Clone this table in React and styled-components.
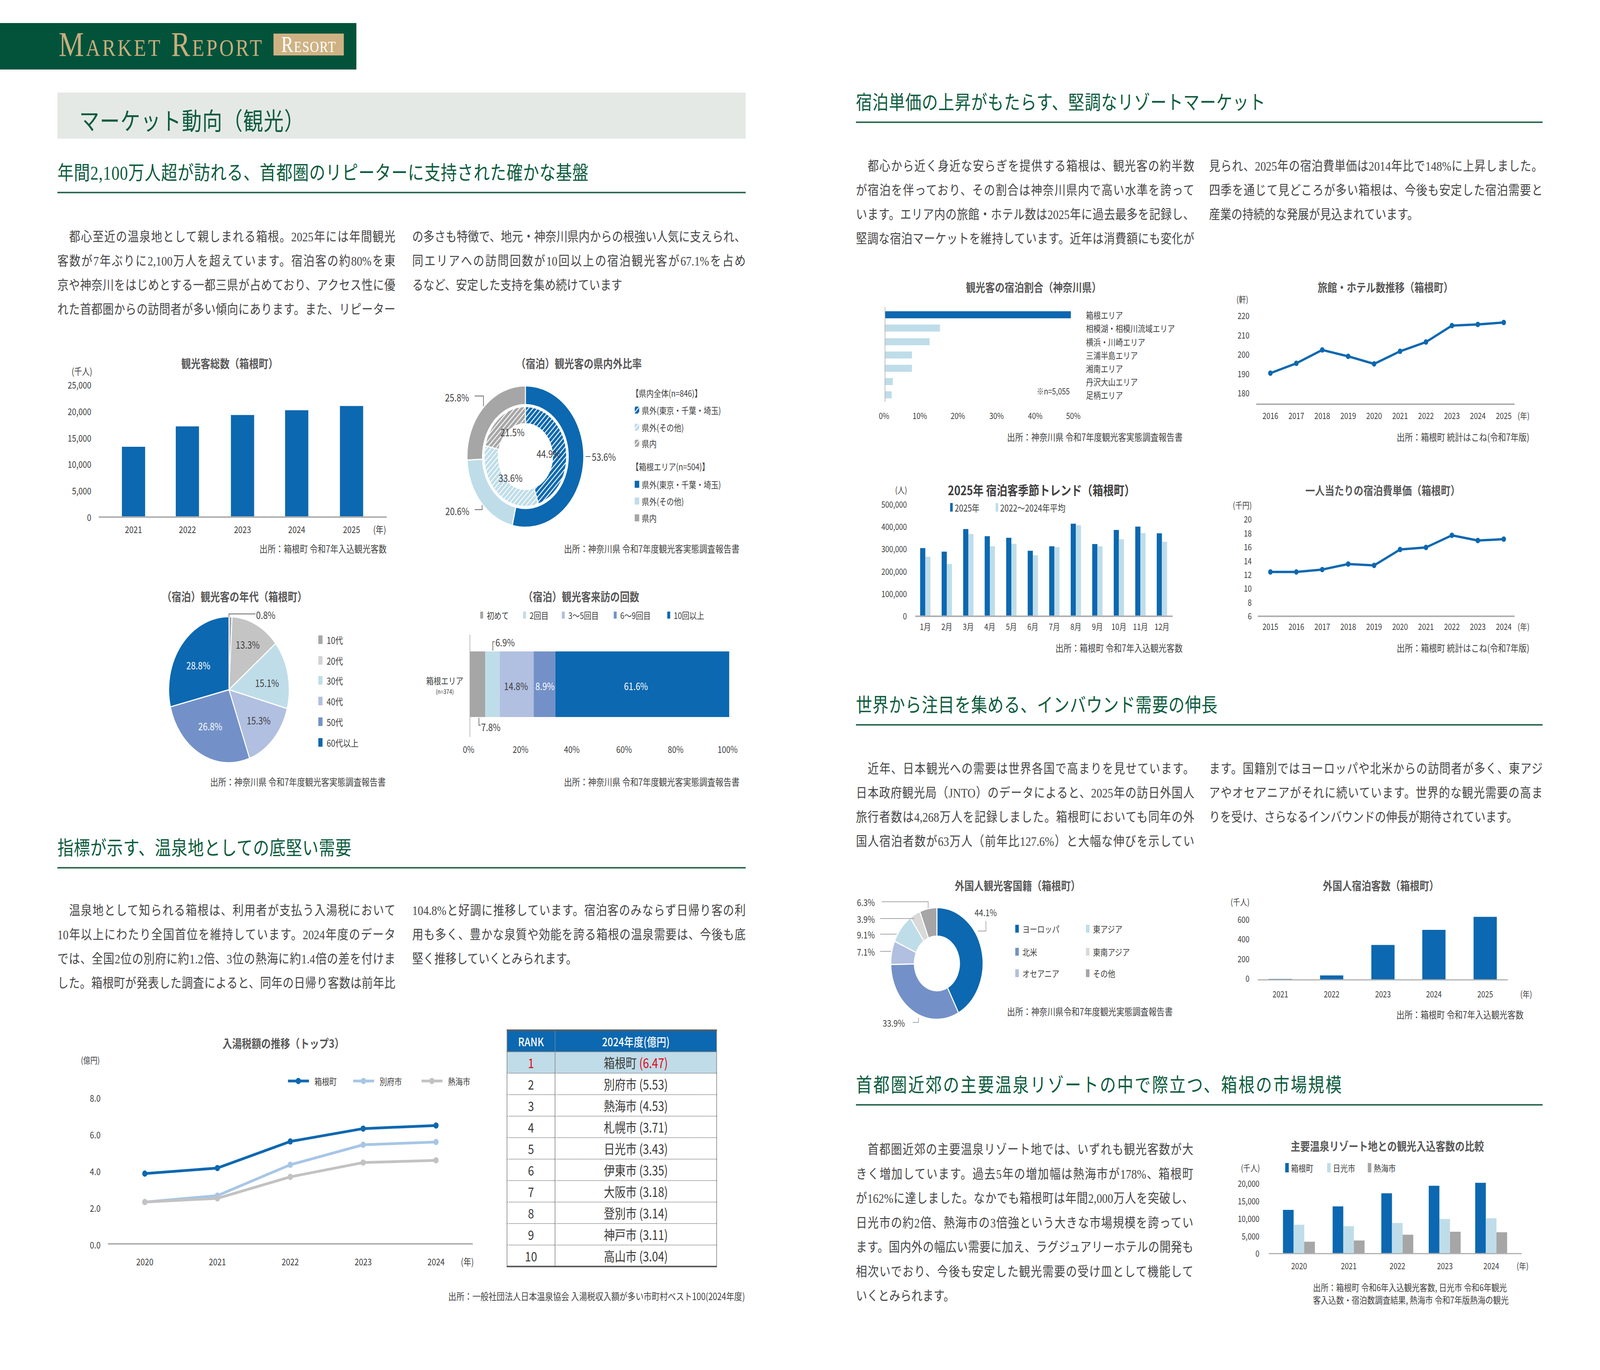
import React, { useEffect, useState } from 'react';
import styled, { createGlobalStyle } from 'styled-components';

const SERIF = `"Liberation Serif", "Noto Sans CJK JP", serif`;
const SANS = `"Noto Sans CJK JP", "Noto Sans", sans-serif`;
const GREEN = '#0d5c3e';
const BLUE = '#0c68b0';
const LBLUE = '#bfdde9';
const LAV = '#b1bfe0';
const MID = '#7391c8';
const GRAY = '#a6a6a6';
const LGRAY = '#d3d3d3';
const AXIS = '#b0b0b0';
const PAGE_W = 4961;
const PAGE_H = 3508;

const GlobalStyle = createGlobalStyle`
  *, *::before, *::after { box-sizing: border-box; }
  html, body { margin: 0; padding: 0; background: #fff; overflow: hidden; }
`;

const Viewport = styled.div`
  width: 100vw;
  height: 100vh;
  overflow: hidden;
`;

const Sheet = styled.div`
  width: ${PAGE_W}px;
  height: ${PAGE_H}px;
  overflow: hidden;
  display: grid;
  grid-template-columns: 2480px 2481px;
  background: #fff;
  color: #444;
  transform-origin: 0 0;
`;

const LeftPage = styled.div`
  padding-top: 59px;
`;

const Column = styled.div`
  padding: 0 168px 0 178px;
`;

const RightPage = styled.div`
  padding: 233px 178px 0 174px;
`;

const Brand = styled.div`
  width: 1105px;
  height: 119px;
  background: #03533b;
  display: flex;
  align-items: center;
  padding: 0 0 10px 182px;
`;

const BrandText = styled.span`
  font-family: "Liberation Serif", serif;
  font-size: 88px;
  line-height: 1;
  font-variant: small-caps;
  letter-spacing: 6px;
  color: #c9ad7d;
`;

const ResortTag = styled.span`
  margin-left: 30px;
  width: 218px;
  height: 56px;
  background: #cfb284;
  color: #fff;
  display: flex;
  align-items: center;
  justify-content: center;
  font-family: "Liberation Serif", serif;
  font-size: 56px;
  line-height: 1;
  font-variant: small-caps;
  letter-spacing: 2px;
`;

const PageTitle = styled.h1`
  margin: 59px 0 0;
  height: 118px;
  background: #e5e9e6;
  display: flex;
  align-items: center;
  padding: 20px 0 0 68px;
  font-family: ${SERIF};
  font-weight: 400;
  font-size: 62px;
  letter-spacing: 1.5px;
  color: ${GREEN};
`;

const SectionHead = styled.h2`
  margin: ${p => p.$top}px 0 0;
  padding-bottom: 18px;
  border-bottom: 4px solid #2f6b53;
  font-family: ${SERIF};
  font-weight: 400;
  font-size: 50px;
  line-height: 60px;
  letter-spacing: ${p => p.$track ?? 1}px;
  color: ${GREEN};
  white-space: nowrap;
`;

const ProseGrid = styled.div`
  margin-top: ${p => p.$top}px;
  display: grid;
  grid-template-columns: ${p => p.$cols};
  column-gap: ${p => p.$gap || 0}px;
  font-family: ${SERIF};
  font-size: 34.4px;
  line-height: ${p => p.$lh || 62}px;
  color: #464646;
`;

const ProseLine = styled.span`
  display: block;
  white-space: nowrap;
  text-align: justify;
  text-align-last: ${p => (p.$last ? 'left' : 'justify')};
`;

const ChartRow = styled.div`
  margin-top: ${p => p.$top}px;
  display: flex;
  gap: ${p => p.$gap || 0}px;
  align-items: flex-start;
`;

const ChartBox = styled.figure`
  margin: 0;
  width: ${p => p.$w}px;
  padding-top: ${p => p.$pt || 0}px;
  display: flex;
  flex-direction: column;
  flex-shrink: 0;
`;

const ChartTitle = styled.figcaption`
  height: 36px;
  line-height: 36px;
  font-family: ${SANS};
  font-size: ${p => p.$size || 30}px;
  font-weight: 700;
  color: ${p => (p.$dark ? '#3f3f3f' : '#595959')};
  text-align: ${p => (p.$left != null ? 'left' : 'center')};
  padding-left: ${p => (p.$left != null ? p.$left : Math.max(0, (p.$shift || 0) * 2))}px;
  padding-right: ${p => Math.max(0, -(p.$shift || 0) * 2)}px;
  white-space: nowrap;
`;

const Plot = styled.svg`
  display: block;
  overflow: visible;
  font-family: ${SANS};
`;

const Source = styled.div`
  margin-top: ${p => p.$top ?? 3}px;
  font-family: ${SANS};
  font-size: 25px;
  line-height: 28px;
  color: #444;
  text-align: right;
  padding-right: ${p => p.$pad || 0}px;
  white-space: nowrap;
`;

const TaxRow = styled.div`
  margin-top: 88px;
  display: flex;
  align-items: flex-start;
`;

const RankTable = styled.table`
  width: 652px;
  border-collapse: collapse;
  font-family: ${SANS};
  border-top: 4px solid #5c5c5c;
  border-bottom: 4px solid #5c5c5c;
  border-left: 2px solid #8a8a8a;
  border-right: 2px solid #8a8a8a;
`;

const HeadCell = styled.th`
  height: 55px;
  padding: 0;
  background: ${BLUE};
  color: #fff;
  font-size: 30px;
  font-weight: 500;
  text-align: center;
  width: ${p => (p.$rank ? '149px' : 'auto')};
  border-right: ${p => (p.$rank ? '2px solid #5d86b8' : 'none')};
`;

const Cell = styled.td`
  height: 55px;
  padding: 0;
  font-size: 34px;
  color: ${p => (p.$red ? '#e60012' : '#3a3a3a')};
  text-align: center;
  background: ${p => (p.$hl ? '#bfdce8' : 'transparent')};
  border-top: ${p => (p.$first ? '2px solid #7a7a7a' : '2px dotted #6a6a6a')};
  border-right: ${p => (p.$rank ? '2px solid #8a8a8a' : 'none')};
`;

const Red = styled.span`
  color: #e60012;
`;

const FinalRow = styled.div`
  margin-top: 81px;
  display: flex;
  align-items: flex-start;
  gap: 56px;
`;

/* ---------- svg helpers ---------- */

const T = ({ c = '#404040', s = 24, w, children, ...p }) => (
  <text fill={c} fontSize={s} fontWeight={w} dominantBaseline="central" {...p}>
    {children}
  </text>
);

const polar = (cx, cy, r, a) => {
  const rad = (a * Math.PI) / 180;
  return [cx + r * Math.sin(rad), cy - r * Math.cos(rad)];
};

const arc = (cx, cy, r0, r1, a0, a1) => {
  const large = a1 - a0 > 180 ? 1 : 0;
  const [x1, y1] = polar(cx, cy, r1, a0);
  const [x2, y2] = polar(cx, cy, r1, a1);
  if (r0 === 0) {
    return `M${cx} ${cy} L${x1} ${y1} A${r1} ${r1} 0 ${large} 1 ${x2} ${y2} Z`;
  }
  const [x3, y3] = polar(cx, cy, r0, a1);
  const [x4, y4] = polar(cx, cy, r0, a0);
  return `M${x1} ${y1} A${r1} ${r1} 0 ${large} 1 ${x2} ${y2} L${x3} ${y3} A${r0} ${r0} 0 ${large} 0 ${x4} ${y4} Z`;
};

const angles = vals => {
  const total = vals.reduce((a, b) => a + b, 0);
  let acc = 0;
  return vals.map(v => {
    const a0 = (acc / total) * 360;
    acc += v;
    return [a0, (acc / total) * 360];
  });
};

const Ring = ({ cx, cy, r0, r1, data, gap = 3 }) => {
  const ang = angles(data.map(d => d[0]));
  return data.map((d, i) => (
    <path key={i} d={arc(cx, cy, r0, r1, ang[i][0], ang[i][1])} fill={d[1]} stroke="#fff" strokeWidth={gap} />
  ));
};

const Hatch = ({ id, color }) => (
  <pattern id={id} patternUnits="userSpaceOnUse" width="10" height="10" patternTransform="rotate(45)">
    <rect width="10" height="10" fill={color} />
    <line x1="5" y1="0" x2="5" y2="10" stroke="#fff" strokeWidth="2.6" />
  </pattern>
);

const Series = ({ xs, ys, color, width = 7, r = 8 }) => (
  <g>
    <polyline points={xs.map((x, i) => `${x},${ys[i]}`).join(' ')} fill="none" stroke={color} strokeWidth={width} strokeLinejoin="round" />
    {xs.map((x, i) => (
      <circle key={i} cx={x} cy={ys[i]} r={r} fill={color} />
    ))}
  </g>
);

const fmt = v => v.toLocaleString('en-US');

/* ---------- left page charts ---------- */

function VisitorsPlot() {
  const y = v => 376 - v * 0.01356;
  const data = [[236, '2021', 13200], [403, '2022', 17050], [574, '2023', 19200], [742, '2024', 20100], [912, '2025', 20900]];
  return (
    <Plot width={1068} height={440}>
      <T x={76} y={2} textAnchor="middle">(千人)</T>
      {[0, 5000, 10000, 15000, 20000, 25000].map(v => (
        <T key={v} x={105} y={y(v)} textAnchor="end">{fmt(v)}</T>
      ))}
      {data.map(([cx, , v]) => (
        <rect key={cx} x={cx - 36} y={y(v)} width={72} height={376 - y(v)} fill={BLUE} />
      ))}
      <line x1={128} x2={1021} y1={377} y2={377} stroke={AXIS} strokeWidth={4} />
      {data.map(([cx, label]) => (
        <T key={label} x={cx} y={407} textAnchor="middle">{label}</T>
      ))}
      <T x={999} y={407} textAnchor="middle">(年)</T>
    </Plot>
  );
}

function ResidencePlot() {
  const cx = 351;
  const cy = 222;
  const legend = [
    { y: 59, t: '【県内全体(n=846)】' },
    { y: 103, t: '県外(東京・千葉・埼玉)', f: 'url(#hbBlue)' },
    { y: 147, t: '県外(その他)', f: 'url(#hbLight)' },
    { y: 188, t: '県内', f: 'url(#hbGray)' },
    { y: 247, t: '【箱根エリア(n=504)】' },
    { y: 293, t: '県外(東京・千葉・埼玉)', f: BLUE },
    { y: 336, t: '県外(その他)', f: LBLUE },
    { y: 379, t: '県内', f: GRAY },
  ];
  return (
    <Plot width={1034} height={440}>
      <defs>
        <Hatch id="hbBlue" color={BLUE} />
        <Hatch id="hbLight" color={LBLUE} />
        <Hatch id="hbGray" color={GRAY} />
      </defs>
      <Ring cx={cx} cy={cy} r0={133} r1={181} data={[[53.6, BLUE], [20.6, LBLUE], [25.8, GRAY]]} />
      <Ring cx={cx} cy={cy} r0={84} r1={128} data={[[44.9, 'url(#hbBlue)'], [33.6, 'url(#hbLight)'], [21.5, 'url(#hbGray)']]} />
      <polyline points="194,67 221,67 221,93" fill="none" stroke="#666" strokeWidth={2} />
      <polyline points="194,358 217,358 217,346" fill="none" stroke="#666" strokeWidth={2} />
      <line x1={538} x2={553} y1={222} y2={222} stroke="#666" strokeWidth={2} />
      <T x={139} y={70} s={26} textAnchor="middle">25.8%</T>
      <T x={140} y={361} s={26} textAnchor="middle">20.6%</T>
      <T x={557} y={222} s={26}>53.6%</T>
      <T x={311} y={159} s={26} textAnchor="middle">21.5%</T>
      <T x={423} y={214} s={26} textAnchor="middle">44.9%</T>
      <T x={305} y={276} s={26} textAnchor="middle">33.6%</T>
      {legend.map(l =>
        l.f ? (
          <g key={l.y}>
            <rect x={690} y={l.y - 9} width={14} height={18} fill={l.f} />
            <T x={712} y={l.y} s={23}>{l.t}</T>
          </g>
        ) : (
          <T key={l.y} x={680} y={l.y} s={23}>{l.t}</T>
        )
      )}
    </Plot>
  );
}

function AgePlot() {
  const cx = 532;
  const cy = 222;
  const pie = [[0.8, GRAY], [13.3, '#c4c4c4'], [15.1, LBLUE], [15.3, LAV], [26.8, MID], [28.8, BLUE]];
  const legend = [['10代', GRAY], ['20代', LGRAY], ['30代', LBLUE], ['40代', LAV], ['50代', MID], ['60代以上', BLUE]];
  const ly = [94, 147, 198, 251, 304, 357];
  return (
    <Plot width={1068} height={440}>
      <Ring cx={cx} cy={cy} r0={0} r1={187} data={pie} />
      <polyline points="532,36 532,28 614,28" fill="none" stroke="#666" strokeWidth={2} />
      <T x={616} y={30} s={26}>0.8%</T>
      <T x={590} y={106} s={26} textAnchor="middle">13.3%</T>
      <T x={650} y={204} s={26} textAnchor="middle">15.1%</T>
      <T x={624} y={300} s={26} textAnchor="middle">15.3%</T>
      <T x={474} y={315} s={26} c="#fff" textAnchor="middle">26.8%</T>
      <T x={437} y={159} s={26} c="#fff" textAnchor="middle">28.8%</T>
      {legend.map(([t, f], i) => (
        <g key={t}>
          <rect x={809} y={ly[i] - 11} width={13} height={22} fill={f} />
          <T x={835} y={ly[i]}>{t}</T>
        </g>
      ))}
    </Plot>
  );
}

function RepeatPlot() {
  const x0 = 179;
  const full = 804;
  const segs = [[5.9, GRAY], [5.6, LBLUE], [13.1, LAV], [8.4, MID], [67.0, BLUE]];
  let acc = x0;
  const rects = segs.map(([p, c]) => {
    const w = (p / 100) * full;
    const r = { x: acc, w, c };
    acc += w;
    return r;
  });
  const legend = [[211, '初めて', GRAY], [344, '2回目', LBLUE], [464, '3～5回目', LAV], [625, '6～9回目', MID], [791, '10回以上', BLUE]];
  const ticks = [[175, '0%'], [336, '20%'], [495, '40%'], [657, '60%'], [817, '80%'], [978, '100%']];
  return (
    <Plot width={1034} height={440}>
      {legend.map(([x, t, c]) => (
        <g key={t}>
          <rect x={x} y={22} width={9} height={18} fill={c} />
          <T x={x + 20} y={31} s={23}>{t}</T>
        </g>
      ))}
      <line x1={x0} x2={x0} y1={81} y2={343} stroke={AXIS} strokeWidth={2} />
      {rects.map(r => (
        <rect key={r.x} x={r.x} y={124} width={r.w} height={168} fill={r.c} />
      ))}
      <polyline points="256,99 250,99 250,122" fill="none" stroke="#666" strokeWidth={2} />
      <polyline points="207,294 207,313 212,313" fill="none" stroke="#666" strokeWidth={2} />
      <T x={258} y={100} s={26}>6.9%</T>
      <T x={214} y={317} s={26}>7.8%</T>
      <T x={322} y={212} s={26} textAnchor="middle">14.8%</T>
      <T x={412} y={212} s={26} c="#fff" textAnchor="middle">8.9%</T>
      <T x={694} y={212} s={26} c="#fff" textAnchor="middle">61.6%</T>
      <T x={101} y={198} s={23} textAnchor="middle">箱根エリア</T>
      <T x={101} y={226} s={16} textAnchor="middle">(n=374)</T>
      {ticks.map(([x, t]) => (
        <T key={t} x={x} y={373} textAnchor="middle">{t}</T>
      ))}
    </Plot>
  );
}

function TaxPlot() {
  const xs = [271, 496, 722, 948, 1174];
  const y = v => 498 - v * 47;
  const legend = [[715, '箱根町', BLUE], [917, '別府市', '#a7c6e6'], [1129, '熱海市', '#c2c2c2']];
  return (
    <Plot width={1393} height={568}>
      <T x={102} y={26} s={22} textAnchor="middle">(億円)</T>
      {legend.map(([x, t, c]) => (
        <g key={t}>
          <line x1={x} x2={x + 65} y1={80} y2={80} stroke={c} strokeWidth={7} />
          <circle cx={x + 32} cy={80} r={8} fill={c} />
          <T x={x + 82} y={80} s={23}>{t}</T>
        </g>
      ))}
      {[0, 2, 4, 6, 8].map(v => (
        <T key={v} x={134} y={y(v)} textAnchor="end">{v.toFixed(1)}</T>
      ))}
      <line x1={157} x2={1288} y1={497} y2={497} stroke={AXIS} strokeWidth={4} />
      <Series xs={xs} ys={[2.3, 2.65, 4.33, 5.42, 5.57].map(y)} color="#a7c6e6" />
      <Series xs={xs} ys={[2.3, 2.5, 3.67, 4.45, 4.57].map(y)} color="#c2c2c2" />
      <Series xs={xs} ys={[3.85, 4.15, 5.6, 6.3, 6.47].map(y)} color={BLUE} />
      {['2020', '2021', '2022', '2023', '2024'].map((t, i) => (
        <T key={t} x={xs[i]} y={541} textAnchor="middle">{t}</T>
      ))}
      <T x={1271} y={541} textAnchor="middle">(年)</T>
    </Plot>
  );
}

/* ---------- right page charts ---------- */

function StayRatioPlot() {
  const rows = [
    ['箱根エリア', 49.6, BLUE],
    ['相模湖・相模川流域エリア', 14.7, LBLUE],
    ['横浜・川崎エリア', 11.9, LBLUE],
    ['三浦半島エリア', 7.2, LBLUE],
    ['湘南エリア', 7.2, LBLUE],
    ['丹沢大山エリア', 2.1, LBLUE],
    ['足柄エリア', 1.8, LBLUE],
  ];
  const ry = [54, 88, 123, 157, 191, 225, 259];
  const ticks = [[87, '0%'], [198, '10%'], [316, '20%'], [436, '30%'], [556, '40%'], [674, '50%']];
  return (
    <Plot width={1102} height={349}>
      {rows.map(([t, v, c], i) => (
        <g key={t}>
          <rect x={90} y={ry[i] - 9} width={v * 11.62} height={18} fill={c} />
          <T x={713} y={ry[i]} s={23}>{t}</T>
        </g>
      ))}
      <line x1={90} x2={90} y1={35} y2={277} stroke={AXIS} strokeWidth={2} />
      <T x={663} y={249} s={22} textAnchor="end">※n=5,055</T>
      {ticks.map(([x, t]) => (
        <T key={t} x={x} y={312} s={22} textAnchor="middle">{t}</T>
      ))}
    </Plot>
  );
}

function HotelPlot() {
  const xs = Array.from({ length: 10 }, (_, i) => 183 + i * 80.4);
  const y = v => 56 + (220 - v) * 4.95;
  const vals = [190.2, 195.3, 202.2, 198.9, 195, 201.5, 206.3, 214.8, 215.4, 216.4];
  return (
    <Plot width={1027} height={349}>
      <T x={96} y={14} s={22} textAnchor="middle">(軒)</T>
      {[180, 190, 200, 210, 220].map(v => (
        <T key={v} x={118} y={y(v)} s={22} textAnchor="end">{v}</T>
      ))}
      <line x1={139} x2={940} y1={283} y2={283} stroke={AXIS} strokeWidth={4} />
      <Series xs={xs} ys={vals.map(y)} color={BLUE} width={6} r={7} />
      {xs.map((x, i) => (
        <T key={x} x={x} y={312} s={22} textAnchor="middle">{2016 + i}</T>
      ))}
      <T x={968} y={312} s={22} textAnchor="middle">(年)</T>
    </Plot>
  );
}

function SeasonPlot() {
  const y = v => 305 - (v / 100000) * 57.3;
  const dark = [303, 287, 388, 356, 349, 291, 311, 412, 321, 384, 399, 369];
  const light = [264, 232, 366, 311, 322, 271, 307, 405, 311, 342, 370, 331];
  const cxs = dark.map((_, i) => 215 + i * 66.7);
  return (
    <Plot width={1102} height={369}>
      <T x={140} y={-18} s={22} textAnchor="middle">(人)</T>
      <rect x={292} y={16} width={8} height={22} fill={BLUE} />
      <T x={306} y={27} s={24}>2025年</T>
      <rect x={433} y={16} width={8} height={22} fill={LBLUE} />
      <T x={447} y={27} s={24}>2022～2024年平均</T>
      {[0, 100000, 200000, 300000, 400000, 500000].map(v => (
        <T key={v} x={158} y={y(v)} s={22} textAnchor="end">{fmt(v)}</T>
      ))}
      {cxs.map((cx, i) => (
        <g key={cx}>
          <rect x={cx - 16} y={y(dark[i] * 1000)} width={16} height={305 - y(dark[i] * 1000)} fill={BLUE} />
          <rect x={cx} y={y(light[i] * 1000)} width={16} height={305 - y(light[i] * 1000)} fill={LBLUE} />
          <T x={cx} y={332} s={22} textAnchor="middle">{`${i + 1}月`}</T>
        </g>
      ))}
      <line x1={184} x2={982} y1={306} y2={306} stroke={AXIS} strokeWidth={4} />
    </Plot>
  );
}

function PricePlot() {
  const xs = Array.from({ length: 10 }, (_, i) => 183 + i * 80.4);
  const y = v => 305 - (v - 6) * 17.7;
  const vals = [12.35, 12.35, 12.7, 13.5, 13.3, 15.6, 15.9, 17.65, 16.9, 17.1];
  return (
    <Plot width={1027} height={369}>
      <T x={96} y={21} s={22} textAnchor="middle">(千円)</T>
      {[6, 8, 10, 12, 14, 16, 18, 20].map(v => (
        <T key={v} x={125} y={y(v)} s={22} textAnchor="end">{v}</T>
      ))}
      <line x1={144} x2={940} y1={306} y2={306} stroke={AXIS} strokeWidth={4} />
      <Series xs={xs} ys={vals.map(y)} color={BLUE} width={6} r={7} />
      {xs.map((x, i) => (
        <T key={x} x={x} y={332} s={22} textAnchor="middle">{2015 + i}</T>
      ))}
      <T x={968} y={332} s={22} textAnchor="middle">(年)</T>
    </Plot>
  );
}

function NationalityPlot() {
  const cx = 251;
  const cy = 183;
  const data = [[44.1, BLUE], [33.9, MID], [7.1, LAV], [9.1, LBLUE], [3.9, '#d9d9d9'], [6.3, GRAY]];
  const legend = [
    [494, 94, 'ヨーロッパ', BLUE],
    [713, 94, '東アジア', LBLUE],
    [494, 153, '北米', MID],
    [713, 153, '東南アジア', '#d9d9d9'],
    [494, 208, 'オセアニア', LAV],
    [713, 208, 'その他', GRAY],
  ];
  return (
    <Plot width={1102} height={358}>
      <Ring cx={cx} cy={cy} r0={70} r1={143} data={data} />
      <g fill="none" stroke="#a6a6a6" strokeWidth={2}>
        <polyline points="80,25 224,25 224,42" />
        <polyline points="75,68 181,68" />
        <polyline points="75,108 126,108" />
        <polyline points="75,152 109,152" />
        <polyline points="403,74 403,100 378,100" />
        <polyline points="176,334 194,334 194,322" />
      </g>
      <T x={3} y={25} s={24}>6.3%</T>
      <T x={3} y={68} s={24}>3.9%</T>
      <T x={3} y={108} s={24}>9.1%</T>
      <T x={3} y={152} s={24}>7.1%</T>
      <T x={368} y={51} s={24}>44.1%</T>
      <T x={83} y={334} s={24}>33.9%</T>
      {legend.map(([x, y, t, c]) => (
        <g key={t}>
          <rect x={x} y={y - 10} width={11} height={20} fill={c} />
          <T x={x + 22} y={y} s={23}>{t}</T>
        </g>
      ))}
      <T x={982} y={305} s={25} c="#444" textAnchor="end">出所：神奈川県令和7年度観光実態調査報告書</T>
    </Plot>
  );
}

function InboundPlot() {
  const y = v => 224 - v * 0.2525;
  const bars = [[214, '2021', 5], [373, '2022', 41], [532, '2023', 350], [690, '2024', 503], [849, '2025', 635]];
  return (
    <Plot width={1027} height={358}>
      <T x={89} y={25} s={22} textAnchor="middle">(千人)</T>
      {[0, 200, 400, 600].map(v => (
        <T key={v} x={118} y={y(v) - 3} s={22} textAnchor="end">{v}</T>
      ))}
      {bars.map(([cx, t, v]) => (
        <g key={t}>
          <rect x={cx - 36} y={y(v)} width={72} height={224 - y(v)} fill={BLUE} />
          <T x={cx} y={261} s={22} textAnchor="middle">{t}</T>
        </g>
      ))}
      <line x1={144} x2={919} y1={225} y2={225} stroke={AXIS} strokeWidth={3} />
      <T x={976} y={261} s={22} textAnchor="middle">(年)</T>
      <T x={968} y={313} s={25} c="#444" textAnchor="end">出所：箱根町 令和7年入込観光客数</T>
    </Plot>
  );
}

function ComparePlot() {
  const y = v => 258 - v * 0.00895;
  const groups = [
    [272, '2020', 12400, 8150, 3300],
    [426, '2021', 13400, 7750, 3650],
    [577, '2022', 17150, 8650, 5300],
    [724, '2023', 19300, 9800, 6150],
    [868, '2024', 20150, 10000, 6000],
  ];
  const legend = [[229, '箱根町', BLUE], [359, '日光市', LBLUE], [485, '熱海市', GRAY]];
  return (
    <Plot width={1027} height={400}>
      <T x={121} y={39} s={22} textAnchor="middle">(千人)</T>
      {legend.map(([x, t, c]) => (
        <g key={t}>
          <rect x={x} y={27} width={11} height={24} fill={c} />
          <T x={x + 18} y={39} s={23}>{t}</T>
        </g>
      ))}
      {[0, 5000, 10000, 15000, 20000].map(v => (
        <T key={v} x={149} y={y(v)} s={22} textAnchor="end">{fmt(v)}</T>
      ))}
      {groups.map(([cx, t, a, b, c]) => (
        <g key={t}>
          <rect x={cx - 50} y={y(a)} width={33} height={258 - y(a)} fill={BLUE} />
          <rect x={cx - 17} y={y(b)} width={33} height={258 - y(b)} fill={LBLUE} />
          <rect x={cx + 16} y={y(c)} width={33} height={258 - y(c)} fill={GRAY} />
          <T x={cx} y={290} s={22} textAnchor="middle">{t}</T>
        </g>
      ))}
      <line x1={178} x2={962} y1={259} y2={259} stroke={AXIS} strokeWidth={3} />
      <T x={965} y={290} s={22} textAnchor="middle">(年)</T>
      <T x={315} y={344} s={24} c="#444">出所：箱根町 令和6年入込観光客数, 日光市 令和6年観光</T>
      <T x={315} y={376} s={24} c="#444">客入込数・宿泊数調査結果, 熱海市 令和7年版熱海の観光</T>
    </Plot>
  );
}

/* ---------- text ---------- */

const Prose = ({ columns, cols, gap, top, lh }) => (
  <ProseGrid $cols={cols} $gap={gap} $top={top} $lh={lh}>
    {columns.map((lines, i) => (
      <div key={i}>
        {lines.map((t, j) => (
          <ProseLine key={j} $last={i === columns.length - 1 && j === lines.length - 1}>
            {t}
          </ProseLine>
        ))}
      </div>
    ))}
  </ProseGrid>
);

const TEXT = {
  intro: [
    [
      '　都心至近の温泉地として親しまれる箱根。2025年には年間観光',
      '客数が7年ぶりに2,100万人を超えています。宿泊客の約80%を東',
      '京や神奈川をはじめとする一都三県が占めており、アクセス性に優',
      'れた首都圏からの訪問者が多い傾向にあります。また、リピーター',
    ],
    [
      'の多さも特徴で、地元・神奈川県内からの根強い人気に支えられ、',
      '同エリアへの訪問回数が10回以上の宿泊観光客が67.1%を占め',
      'るなど、安定した支持を集め続けています',
    ],
  ],
  onsen: [
    [
      '　温泉地として知られる箱根は、利用者が支払う入湯税において',
      '10年以上にわたり全国首位を維持しています。2024年度のデータ',
      'では、全国2位の別府に約1.2倍、3位の熱海に約1.4倍の差を付けま',
      'した。箱根町が発表した調査によると、同年の日帰り客数は前年比',
    ],
    [
      '104.8%と好調に推移しています。宿泊客のみならず日帰り客の利',
      '用も多く、豊かな泉質や効能を誇る箱根の温泉需要は、今後も底',
      '堅く推移していくとみられます。',
    ],
  ],
  stay: [
    [
      '　都心から近く身近な安らぎを提供する箱根は、観光客の約半数',
      'が宿泊を伴っており、その割合は神奈川県内で高い水準を誇って',
      'います。エリア内の旅館・ホテル数は2025年に過去最多を記録し、',
      '堅調な宿泊マーケットを維持しています。近年は消費額にも変化が',
    ],
    [
      '見られ、2025年の宿泊費単価は2014年比で148%に上昇しました。',
      '四季を通じて見どころが多い箱根は、今後も安定した宿泊需要と',
      '産業の持続的な発展が見込まれています。',
    ],
  ],
  inbound: [
    [
      '　近年、日本観光への需要は世界各国で高まりを見せています。',
      '日本政府観光局（JNTO）のデータによると、2025年の訪日外国人',
      '旅行者数は4,268万人を記録しました。箱根町においても同年の外',
      '国人宿泊者数が63万人（前年比127.6%）と大幅な伸びを示してい',
    ],
    [
      'ます。国籍別ではヨーロッパや北米からの訪問者が多く、東アジ',
      'アやオセアニアがそれに続いています。世界的な観光需要の高ま',
      'りを受け、さらなるインバウンドの伸長が期待されています。',
    ],
  ],
  scale: [
    [
      '　首都圏近郊の主要温泉リゾート地では、いずれも観光客数が大',
      'きく増加しています。過去5年の増加幅は熱海市が178%、箱根町',
      'が162%に達しました。なかでも箱根町は年間2,000万人を突破し、',
      '日光市の約2倍、熱海市の3倍強という大きな市場規模を誇ってい',
      'ます。国内外の幅広い需要に加え、ラグジュアリーホテルの開発も',
      '相次いでおり、今後も安定した観光需要の受け皿として機能して',
      'いくとみられます。',
    ],
  ],
};

const RANKS = [
  ['箱根町', '6.47'],
  ['別府市', '5.53'],
  ['熱海市', '4.53'],
  ['札幌市', '3.71'],
  ['日光市', '3.43'],
  ['伊東市', '3.35'],
  ['大阪市', '3.18'],
  ['登別市', '3.14'],
  ['神戸市', '3.11'],
  ['高山市', '3.04'],
];

const SRC_KANAGAWA = '出所：神奈川県 令和7年度観光客実態調査報告書';
const SRC_HAKONE = '出所：箱根町 令和7年入込観光客数';
const SRC_STATS = '出所：箱根町 統計はこね(令和7年版)';

// the sandbox browser may give a narrower window than the page; fit the sheet into it
const fitScale = () => ({
  x: Math.min(1, window.innerWidth / PAGE_W),
  y: Math.min(1, window.innerHeight / PAGE_H),
});

const App = () => {
  const [scale, setScale] = useState(fitScale);

  useEffect(() => {
    const onResize = () => setScale(fitScale());
    window.addEventListener('resize', onResize);
    return () => window.removeEventListener('resize', onResize);
  }, []);

  return (
    <>
      <GlobalStyle />
      <Viewport>
        <Sheet style={{ transform: `scale(${scale.x}, ${scale.y})` }}>
          <LeftPage>
            <Brand>
              <BrandText>Market Report</BrandText>
              <ResortTag>Resort</ResortTag>
            </Brand>
            <Column>
              <PageTitle>マーケット動向（観光）</PageTitle>
              <SectionHead $top={58}>年間2,100万人超が訪れる、首都圏のリピーターに支持された確かな基盤</SectionHead>
              <Prose columns={TEXT.intro} cols="1048px 1034px" gap={52} top={80} />

              <ChartRow $top={88} $gap={32}>
                <ChartBox $w={1068}>
                  <ChartTitle>観光客総数（箱根町）</ChartTitle>
                  <VisitorsPlot />
                  <Source $pad={47}>{SRC_HAKONE}</Source>
                </ChartBox>
                <ChartBox $w={1034}>
                  <ChartTitle>（宿泊）観光客の県内外比率</ChartTitle>
                  <ResidencePlot />
                  <Source $pad={19}>{SRC_KANAGAWA}</Source>
                </ChartBox>
              </ChartRow>

              <ChartRow $top={90} $gap={32}>
                <ChartBox $w={1068}>
                  <ChartTitle $shift={15}>（宿泊）観光客の年代（箱根町）</ChartTitle>
                  <AgePlot />
                  <Source $pad={50}>{SRC_KANAGAWA}</Source>
                </ChartBox>
                <ChartBox $w={1034}>
                  <ChartTitle $shift={7}>（宿泊）観光客来訪の回数</ChartTitle>
                  <RepeatPlot />
                  <Source $pad={19}>{SRC_KANAGAWA}</Source>
                </ChartBox>
              </ChartRow>

              <SectionHead $top={127}>指標が示す、温泉地としての底堅い需要</SectionHead>
              <Prose columns={TEXT.onsen} cols="1048px 1034px" gap={52} top={76} />

              <TaxRow>
                <ChartBox $w={1393} $pt={16}>
                  <ChartTitle $shift={4}>入湯税額の推移（トップ3）</ChartTitle>
                  <TaxPlot />
                </ChartBox>
                <RankTable>
                  <thead>
                    <tr>
                      <HeadCell $rank>RANK</HeadCell>
                      <HeadCell>2024年度(億円)</HeadCell>
                    </tr>
                  </thead>
                  <tbody>
                    {RANKS.map(([name, val], i) => (
                      <tr key={name}>
                        <Cell $rank $first={i === 0} $hl={i === 0} $red={i === 0}>{i + 1}</Cell>
                        <Cell $first={i === 0} $hl={i === 0}>
                          {name} {i === 0 ? <Red>({val})</Red> : `(${val})`}
                        </Cell>
                      </tr>
                    ))}
                  </tbody>
                </RankTable>
              </TaxRow>
              <Source $top={48} $pad={2}>出所：一般社団法人日本温泉協会 入湯税収入額が多い市町村ベスト100(2024年度)</Source>
            </Column>
          </LeftPage>

          <RightPage>
            <SectionHead $top={0}>宿泊単価の上昇がもたらす、堅調なリゾートマーケット</SectionHead>
            <Prose columns={TEXT.stay} cols="1049px 1034px" gap={46} top={79} />

            <ChartRow $top={74}>
              <ChartBox $w={1102}>
                <ChartTitle>観光客の宿泊割合（神奈川県）</ChartTitle>
                <StayRatioPlot />
                <Source $pad={89}>{SRC_KANAGAWA}</Source>
              </ChartBox>
              <ChartBox $w={1027}>
                <ChartTitle $shift={26}>旅館・ホテル数推移（箱根町）</ChartTitle>
                <HotelPlot />
                <Source $pad={41}>{SRC_STATS}</Source>
              </ChartBox>
            </ChartRow>

            <ChartRow $top={104}>
              <ChartBox $w={1102}>
                <ChartTitle $left={285} $size={33} $dark>2025年 宿泊客季節トレンド（箱根町）</ChartTitle>
                <SeasonPlot />
                <Source $pad={89}>{SRC_HAKONE}</Source>
              </ChartBox>
              <ChartBox $w={1027}>
                <ChartTitle $shift={18}>一人当たりの宿泊費単価（箱根町）</ChartTitle>
                <PricePlot />
                <Source $pad={41}>{SRC_STATS}</Source>
              </ChartBox>
            </ChartRow>

            <SectionHead $top={104}>世界から注目を集める、インバウンド需要の伸長</SectionHead>
            <Prose columns={TEXT.inbound} cols="1049px 1034px" gap={46} top={79} />

            <ChartRow $top={63}>
              <ChartBox $w={1102}>
                <ChartTitle $shift={-50}>外国人観光客国籍（箱根町）</ChartTitle>
                <NationalityPlot />
              </ChartBox>
              <ChartBox $w={1027}>
                <ChartTitle $shift={12}>外国人宿泊客数（箱根町）</ChartTitle>
                <InboundPlot />
              </ChartBox>
            </ChartRow>

            <SectionHead $top={107} $track={4}>首都圏近郊の主要温泉リゾートの中で際立つ、箱根の市場規模</SectionHead>
            <FinalRow>
              <Prose columns={TEXT.scale} cols="1046px" top={0} lh={62.5} />
              <ChartBox $w={1027} $pt={3}>
                <ChartTitle $shift={32}>主要温泉リゾート地との観光入込客数の比較</ChartTitle>
                <ComparePlot />
              </ChartBox>
            </FinalRow>
          </RightPage>
        </Sheet>
      </Viewport>
    </>
  );
};

export default App;
